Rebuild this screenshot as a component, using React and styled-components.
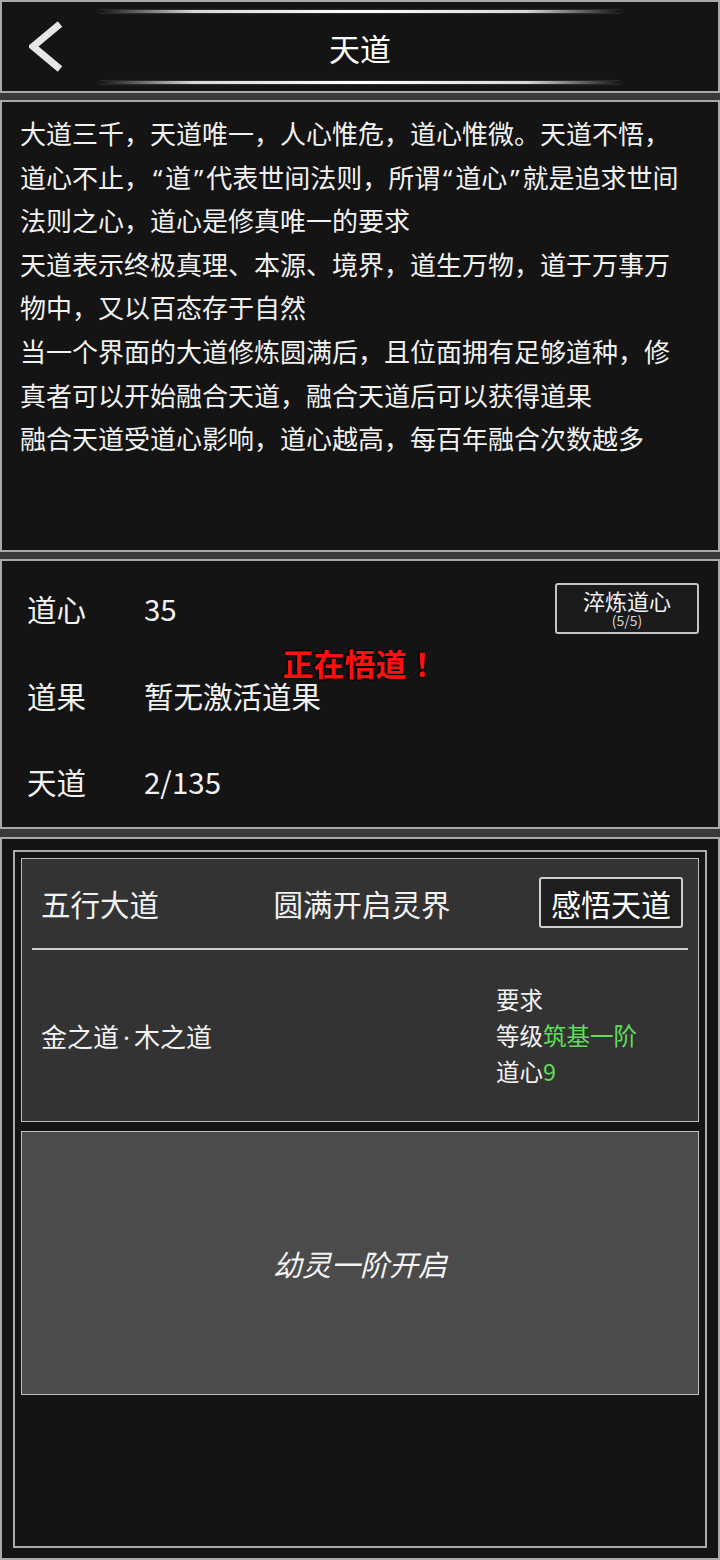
import React from 'react'
import styled, { createGlobalStyle } from 'styled-components'

const GlobalStyle = createGlobalStyle`
    html, body {
        margin:0;
        padding:0;
        background-color:#3a3a3a;
    }
    body {
        font-family: "Noto Sans CJK SC", "Noto Sans", sans-serif;
        color:#f2f2f2;
    }
`

const Page = styled.div`
    width:720px;
    height:1560px;
    display:flex;
    flex-direction:column;
    box-sizing:border-box;
`

const Panel = styled.div`
    box-sizing:border-box;
    background-color:#141414;
    border:2px solid #a9a9a9;
    height:${(p) => p.height}px;
    margin-top:${(p) => p.gap || 0}px;
    position:relative;
    flex-shrink:0;
`

const Header = styled(Panel)`
    display:flex;
    flex-direction:column;
    align-items:center;
    padding:8px 0 7px;
`

const GlowLine = styled.div`
    width:520px;
    height:3px;
    background:linear-gradient(to right, rgba(255,255,255,0), #d8d8d8 18%, #ffffff 50%, #d8d8d8 82%, rgba(255,255,255,0));
    box-shadow:0 0 2px rgba(255,255,255,0.35);
`

const TitleRow = styled.div`
    flex:1;
    width:100%;
    display:grid;
    grid-template-columns:1fr auto 1fr;
    align-items:center;
`

const BackButton = styled.svg`
    justify-self:start;
    margin-left:27px;
    width:34px;
    height:52px;
`

const Title = styled.h1`
    margin:0;
    font-size:31px;
    font-weight:400;
    color:#ffffff;
    line-height:1;
`

const Intro = styled(Panel)`
    padding:9px 30px 0 18px;
`

const IntroLine = styled.p`
    margin:0;
    font-size:26px;
    line-height:43.6px;
    color:#f2f2f2;
`

// western punctuation in the copy is set narrow, as in the game font
const Narrow = styled.span`
    display:inline-block;
    width:0.58em;
    line-height:1;
    text-align:center;
    font-family:"Noto Sans", sans-serif;
`

const Stats = styled(Panel)`
    padding:4px 19px 0 25px;
`

const StatRow = styled.div`
    display:flex;
    align-items:center;
    height:86.5px;
    font-size:29.5px;
`

const StatLabel = styled.span`
    width:117px;
    color:#f2f2f2;
`

const StatValue = styled.span`
    color:#f2f2f2;
`

const TemperButton = styled.button`
    margin-left:auto;
    width:144px;
    height:51px;
    box-sizing:border-box;
    background-color:#1b1b1b;
    border:2px solid #c4c4c4;
    border-radius:3px;
    color:#f2f2f2;
    font-family:inherit;
    display:flex;
    flex-direction:column;
    align-items:center;
    justify-content:center;
    padding:0 0 1px;
`

const TemperMain = styled.span`
    display:block;
    font-size:22px;
    line-height:24px;
`

const TemperSub = styled.span`
    display:block;
    font-size:14px;
    line-height:16px;
    color:#d8d8d8;
`

const Enlightening = styled.div`
    position:absolute;
    left:50%;
    top:102px;
    transform:translate(-50%, -50%);
    font-family:"Noto Sans CJK JP", "Noto Sans CJK SC", sans-serif;
    font-size:31px;
    line-height:36px;
    font-weight:700;
    color:#ff1010;
    white-space:nowrap;
    text-shadow:0 0 2px #000, 1px 1px 1px #000, -1px -1px 1px #000;
`

const Realm = styled(Panel)`
    flex:1;
    padding:11px 11px 10px 11px;
`

const Frame = styled.div`
    box-sizing:border-box;
    height:100%;
    border:2px solid #a9a9a9;
    padding:6px 6px;
    display:flex;
    flex-direction:column;
    gap:9px;
`

const Card = styled.div`
    box-sizing:border-box;
    height:264px;
    border:1.5px solid #bdbdbd;
    background-color:${(p) => p.tone};
    display:flex;
    flex-direction:column;
`

const CardHead = styled.div`
    display:grid;
    grid-template-columns:1fr auto 1fr;
    align-items:center;
    padding:18px 15px 20px 19px;
    font-size:29.5px;
`

const Divider = styled.div`
    height:1.5px;
    margin:0 10px;
    background-color:#d0d0d0;
`

const ComprehendButton = styled.button`
    justify-self:end;
    height:51px;
    box-sizing:border-box;
    padding:0 10px;
    background-color:#1e1e1e;
    border:2px solid #cfcfcf;
    border-radius:3px;
    color:#ffffff;
    font-family:inherit;
    font-size:30px;
    line-height:1;
`

const CardBody = styled.div`
    flex:1;
    display:grid;
    grid-template-columns:1fr 202px;
    align-items:center;
    padding-left:19px;
`

const PathNames = styled.span`
    font-size:26px;
`

const Requirements = styled.div`
    font-size:23.5px;
    line-height:36px;
    display:flex;
    flex-direction:column;
`

const Green = styled.span`
    color:#5fdc5a;
`

const LockedText = styled.div`
    flex:1;
    display:flex;
    align-items:center;
    justify-content:center;
    font-size:29px;
    font-style:italic;
    color:#f4f4f4;
`

function Copy({ text }) {
    return text.split(/([“”·])/).map((part, i) =>
        /^[“”·]$/.test(part) ? <Narrow key={i}>{part}</Narrow> : part
    );
}

export default function App() {
    const intro = [
        "大道三千，天道唯一，人心惟危，道心惟微。天道不悟，道心不止，“道”代表世间法则，所谓“道心”就是追求世间法则之心，道心是修真唯一的要求",
        "天道表示终极真理、本源、境界，道生万物，道于万事万物中，又以百态存于自然",
        "当一个界面的大道修炼圆满后，且位面拥有足够道种，修真者可以开始融合天道，融合天道后可以获得道果",
        "融合天道受道心影响，道心越高，每百年融合次数越多"
    ];

    return (
        <>
            <GlobalStyle />
            <Page>
                <Header height={93}>
                    <GlowLine />
                    <TitleRow>
                        <BackButton viewBox="0 0 34 52">
                            <polyline points="31,3 4,25.5 31,48" fill="none" stroke="#e6e6e6" strokeWidth="7" strokeLinejoin="miter" />
                        </BackButton>
                        <Title>天道</Title>
                        <span />
                    </TitleRow>
                    <GlowLine />
                </Header>

                <Intro height={452} gap={7}>
                    {intro.map((line, i) => (
                        <IntroLine key={i}><Copy text={line} /></IntroLine>
                    ))}
                </Intro>

                <Stats height={270} gap={7}>
                    <StatRow>
                        <StatLabel>道心</StatLabel>
                        <StatValue>35</StatValue>
                        <TemperButton>
                            <TemperMain>淬炼道心</TemperMain>
                            <TemperSub>(5/5)</TemperSub>
                        </TemperButton>
                    </StatRow>
                    <StatRow>
                        <StatLabel>道果</StatLabel>
                        <StatValue>暂无激活道果</StatValue>
                    </StatRow>
                    <StatRow>
                        <StatLabel>天道</StatLabel>
                        <StatValue>2/135</StatValue>
                    </StatRow>
                    <Enlightening>正在悟道！</Enlightening>
                </Stats>

                <Realm gap={8}>
                    <Frame>
                        <Card tone="#333333">
                            <CardHead>
                                <span>五行大道</span>
                                <span>圆满开启灵界</span>
                                <ComprehendButton>感悟天道</ComprehendButton>
                            </CardHead>
                            <Divider />
                            <CardBody>
                                <PathNames><Copy text="金之道·木之道" /></PathNames>
                                <Requirements>
                                    <span>要求</span>
                                    <span>等级<Green>筑基一阶</Green></span>
                                    <span>道心<Green>9</Green></span>
                                </Requirements>
                            </CardBody>
                        </Card>
                        <Card tone="#4b4b4b">
                            <LockedText>幼灵一阶开启</LockedText>
                        </Card>
                    </Frame>
                </Realm>
            </Page>
        </>
    )
}
